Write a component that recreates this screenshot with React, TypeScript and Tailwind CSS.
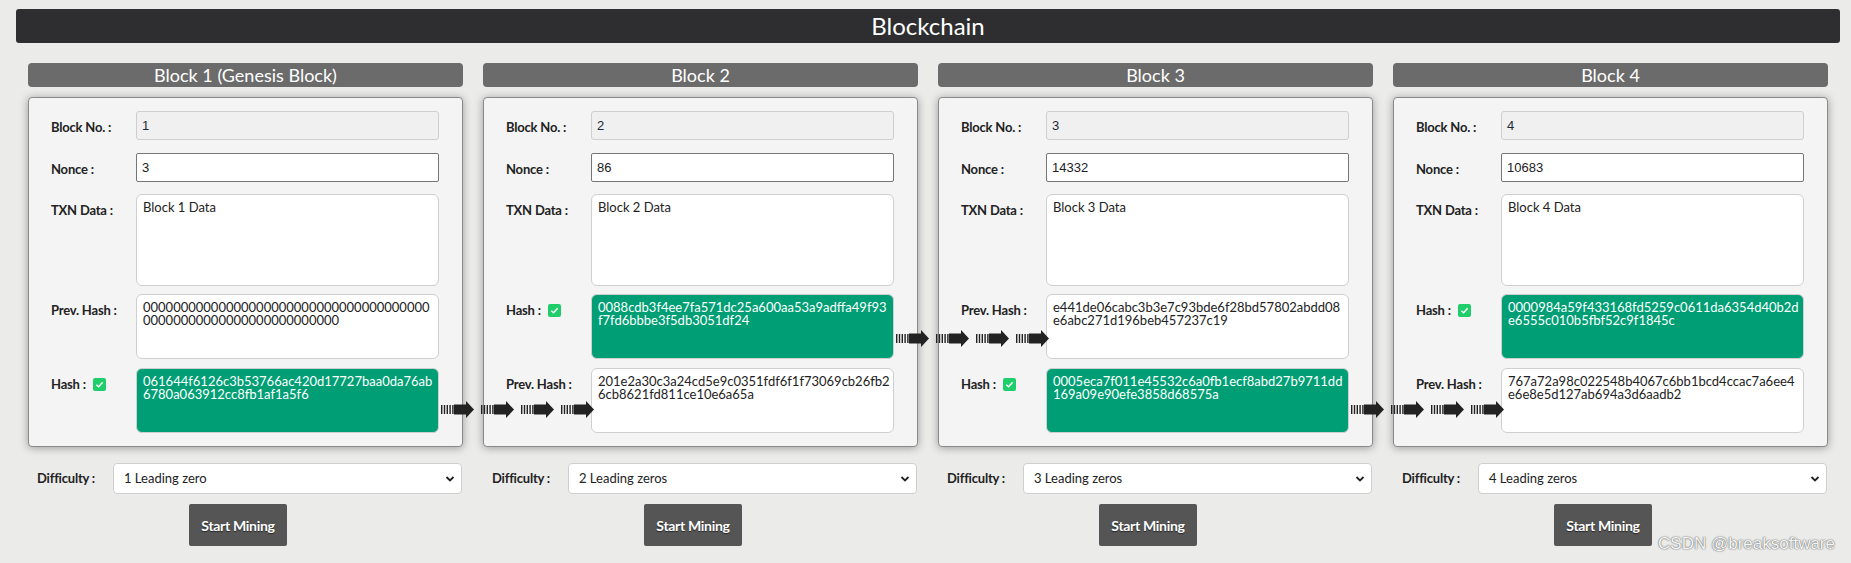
const blocks = [
  {
    title: "Block 1 (Genesis Block)",
    no: "1",
    nonce: "3",
    data: "Block 1 Data",
    prev: "0000000000000000000000000000000000000000000000000000000000000000",
    hash: "061644f6126c3b53766ac420d17727baa0da76ab6780a063912cc8fb1af1a5f6",
    hashFirst: false,
    arrowTop: 33,
    difficulty: "1 Leading zero",
  },
  {
    title: "Block 2",
    no: "2",
    nonce: "86",
    data: "Block 2 Data",
    prev: "201e2a30c3a24cd5e9c0351fdf6f1f73069cb26fb26cb8621fd811ce10e6a65a",
    hash: "0088cdb3f4ee7fa571dc25a600aa53a9adffa49f93f7fd6bbbe3f5db3051df24",
    hashFirst: true,
    arrowTop: 36,
    difficulty: "2 Leading zeros",
  },
  {
    title: "Block 3",
    no: "3",
    nonce: "14332",
    data: "Block 3 Data",
    prev: "e441de06cabc3b3e7c93bde6f28bd57802abdd08e6abc271d196beb457237c19",
    hash: "0005eca7f011e45532c6a0fb1ecf8abd27b9711dd169a09e90efe3858d68575a",
    hashFirst: false,
    arrowTop: 33,
    difficulty: "3 Leading zeros",
  },
  {
    title: "Block 4",
    no: "4",
    nonce: "10683",
    data: "Block 4 Data",
    prev: "767a72a98c022548b4067c6bb1bcd4ccac7a6ee4e6e8e5d127ab694a3d6aadb2",
    hash: "0000984a59f433168fd5259c0611da6354d40b2de6555c010b5fbf52c9f1845c",
    hashFirst: true,
    arrowTop: 0,
    difficulty: "4 Leading zeros",
  },
];

const Arrow = () => (
  <svg width="33" height="17" viewBox="0 0 33 17">
    <rect x="0" y="4" width="1.4" height="9" fill="#222" />
    <rect x="2.8" y="4" width="1.4" height="9" fill="#222" />
    <rect x="5.6" y="4" width="1.4" height="9" fill="#222" />
    <rect x="8.4" y="4" width="1.4" height="9" fill="#222" />
    <rect x="11.2" y="4" width="1.4" height="9" fill="#222" />
    <rect x="13" y="3.5" width="13" height="10" fill="#222" />
    <polygon points="25,0 33,8.5 25,17" fill="#222" />
  </svg>
);

const Label = ({ children }: { children: React.ReactNode }) => (
  <div className="w-[85px] shrink-0 self-start pt-[9px] text-[13px] leading-[15px] font-bold tracking-[-0.2px] text-[#222] flex items-center">
    {children}
  </div>
);

const Check = () => (
  <span className="ml-[7px] w-[13px] h-[13px] rounded-[2px] bg-[#1fcd6b] flex items-center justify-center">
    <svg width="9" height="9" viewBox="0 0 10 10">
      <path d="M1.5 5.2 L4 7.5 L8.5 2.5" stroke="white" strokeWidth="1.6" fill="none" />
    </svg>
  </span>
);

const HashRow = ({ hash, arrowTop, className }: { hash: string; arrowTop: number; className: string }) => (
  <div className={`flex ${className}`}>
    <Label>
      Hash :<Check />
    </Label>
    <div className="relative flex-1">
      <div className="h-[65px] rounded-[6px] border border-[#cfcfcf] bg-[#009e74] pl-[6px] pr-[2px] pt-[6px] text-[13px] leading-[13px] text-white break-all">
        {hash}
      </div>
      {arrowTop > 0 && (
        <div
          className="absolute left-[calc(100%+2px)] z-10 flex gap-[7px]"
          style={{ top: arrowTop }}
        >
          <Arrow />
          <Arrow />
          <Arrow />
          <Arrow />
        </div>
      )}
    </div>
  </div>
);

const PrevRow = ({ prev, className }: { prev: string; className: string }) => (
  <div className={`flex ${className}`}>
    <Label>Prev. Hash :</Label>
    <div className="flex-1 h-[65px] rounded-[6px] border border-[#cfcfcf] bg-white pl-[6px] pr-[2px] pt-[6px] text-[13px] leading-[13px] text-[#222] break-all">
      {prev}
    </div>
  </div>
);

const BlockColumn = ({ block }: { block: (typeof blocks)[number] }) => (
  <div className="flex flex-col">
    <div className="h-[24px] rounded-[4px] bg-[#6b6b6b] text-center text-[18px] leading-[24px] text-white">
      {block.title}
    </div>
    <div className="mt-[10px] rounded-[4px] border border-[#8a8a8a] bg-[#f4f4f4] pl-[22px] pr-[23px] pt-[13px] pb-[13px] shadow-[0_1px_8px_rgba(0,0,0,0.35)]">
      <div className="flex">
        <Label>Block No. :</Label>
        <div className="flex-1 h-[29px] rounded-[3px] border border-[#cfcfcf] bg-[#f0f0f0] px-[5px] text-[13px] leading-[27px] text-[#1e2a3a] font-['Liberation_Sans',sans-serif]">
          {block.no}
        </div>
      </div>
      <div className="mt-[13px] flex">
        <Label>Nonce :</Label>
        <div className="flex-1 h-[29px] rounded-[2px] border border-[#767676] bg-white px-[5px] text-[13px] leading-[27px] text-[#222] font-['Liberation_Sans',sans-serif]">
          {block.nonce}
        </div>
      </div>
      <div className="mt-[12px] flex">
        <Label>TXN Data :</Label>
        <div className="flex-1 h-[92px] rounded-[6px] border border-[#cfcfcf] bg-white px-[6px] pt-[5px] text-[13px] leading-[15px] text-[#222]">
          {block.data}
        </div>
      </div>
      {block.hashFirst ? (
        <>
          <HashRow hash={block.hash} arrowTop={block.arrowTop} className="mt-[8px]" />
          <PrevRow prev={block.prev} className="mt-[9px]" />
        </>
      ) : (
        <>
          <PrevRow prev={block.prev} className="mt-[8px]" />
          <HashRow hash={block.hash} arrowTop={block.arrowTop} className="mt-[9px]" />
        </>
      )}
    </div>
    <div className="mt-[16px] flex items-center">
      <div className="w-[85px] shrink-0 pl-[9px] text-[13px] font-bold tracking-[-0.2px] text-[#222]">Difficulty :</div>
      <div className="relative mr-[1px] flex-1 h-[31px] rounded-[4px] border border-[#cfcfcf] bg-white pl-[10px] text-[13px] leading-[29px] text-[#222]">
        {block.difficulty}
        <svg className="absolute right-[6px] top-[10px]" width="10" height="10" viewBox="0 0 10 10">
          <path d="M1.5 3 L5 6.5 L8.5 3" stroke="#222" strokeWidth="1.8" fill="none" />
        </svg>
      </div>
    </div>
    <button className="mt-[10px] ml-[161px] w-[98px] h-[42px] rounded-[2px] bg-[#555555] text-[14px] font-bold tracking-[-0.3px] text-white [text-shadow:0_1px_1px_rgba(0,0,0,0.6)]">
      Start Mining
    </button>
  </div>
);

export default function App() {
  return (
    <div className="relative w-[1851px] h-[563px] overflow-hidden bg-[#ebebea] font-['Lato',sans-serif] pt-[9px]">
      <div className="ml-[16px] w-[1824px] h-[34px] rounded-[3px] bg-[#2e2e30] text-center text-[24px] leading-[34px] text-white">
        Blockchain
      </div>
      <div className="mt-[20px] ml-[28px] grid w-[1800px] grid-cols-4 gap-[20px]">
        {blocks.map((block) => (
          <BlockColumn key={block.title} block={block} />
        ))}
      </div>
      <div className="absolute right-[16px] bottom-[9px] text-[17px] leading-[20px] text-[#f6f6f6] font-['Liberation_Sans',sans-serif] [text-shadow:0_0_1px_#555,0_0_2px_#888]">
        CSDN @breaksoftware
      </div>
    </div>
  );
}
